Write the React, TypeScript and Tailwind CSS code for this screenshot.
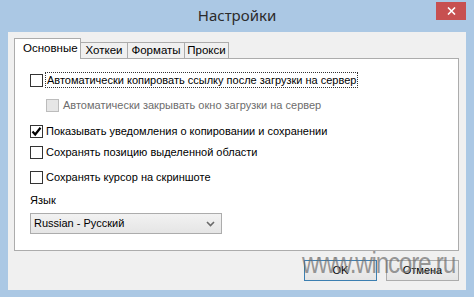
import React from "react";

const font = { fontFamily: '"Liberation Sans", Arial, sans-serif' };

function Box({ checked, disabled }: { checked?: boolean; disabled?: boolean }) {
  return (
    <div
      className={
        "w-[13px] h-[13px] shrink-0 border flex items-center justify-center " +
        (disabled ? "border-[#bcbcbc] bg-[#e6e6e6]" : "border-[#333333] bg-white")
      }
    >
      {checked && (
        <svg width="11" height="11" viewBox="0 0 11 11">
          <path d="M1.5 5.5 L4.2 8.5 L9.5 1.8" fill="none" stroke="#000" strokeWidth="2.2" />
        </svg>
      )}
    </div>
  );
}

export default function App() {
  return (
    <div
      className="w-[474px] h-[297px] bg-[#abc8e4] flex flex-col relative overflow-hidden text-[11px] text-black"
      style={font}
    >
      <div className="h-[32px] shrink-0 relative flex items-center justify-center">
        <span
          className="text-[15px] text-[#2b2b2b] mt-[-2px]"
          style={{ fontFamily: '"Noto Sans", sans-serif' }}
        >
          Настройки
        </span>
        <div className="absolute right-[8px] top-[2px] w-[30px] h-[18px] bg-[#c75050] flex items-center justify-center">
          <svg width="9" height="8" viewBox="0 0 9 8">
            <path d="M1 0.5 L8 7.5 M8 0.5 L1 7.5" stroke="#fff" strokeWidth="1.6" />
          </svg>
        </div>
      </div>
      <div className="mx-[8px] h-[258px] bg-[#f0f0f0] flex flex-col pl-[6px] pr-[7px] pt-[6px]">
        <div className="flex items-end h-[20px]">
          <div className="h-[21px] w-[67px] bg-white border border-b-0 border-[#acacac] flex items-center pl-[8px] relative z-10 mb-[-1px] text-[11.5px]">
            Основные
          </div>
          <div className="h-[16px] w-[47px] bg-[#f0f0f0] border border-l-0 border-b-0 border-[#acacac] flex items-center justify-center text-[11.5px]">
            Хоткеи
          </div>
          <div className="h-[16px] w-[57px] bg-[#f0f0f0] border border-l-0 border-b-0 border-[#acacac] flex items-center justify-center text-[11.5px]">
            Форматы
          </div>
          <div className="h-[16px] w-[44px] bg-[#f0f0f0] border border-l-0 border-b-0 border-[#acacac] flex items-center justify-center text-[11.5px]">
            Прокси
          </div>
        </div>
        <div className="h-[193px] bg-white border border-[#acacac] flex flex-col pl-[15px] pt-[13px]">
          <div className="h-[16px] flex items-center gap-[2px]">
            <Box />
            <span className="border border-dotted border-[#333] px-[1px] leading-[14px] whitespace-nowrap">
              Автоматически копировать ссылку после загрузки на сервер
            </span>
          </div>
          <div className="h-[16px] mt-[9px] flex items-center gap-[4px] pl-[16px] text-[#6d6d6d]">
            <Box disabled />
            <span className="whitespace-nowrap">Автоматически закрывать окно загрузки на сервер</span>
          </div>
          <div className="h-[16px] mt-[10px] flex items-center gap-[3px]">
            <Box checked />
            <span className="whitespace-nowrap">Показывать уведомления о копировании и сохранении</span>
          </div>
          <div className="h-[16px] mt-[5px] flex items-center gap-[3px]">
            <Box />
            <span className="whitespace-nowrap">Сохранять позицию выделенной области</span>
          </div>
          <div className="h-[16px] mt-[9px] flex items-center gap-[3px]">
            <Box />
            <span className="whitespace-nowrap">Сохранять курсор на скриншоте</span>
          </div>
          <div className="h-[16px] mt-[7px] flex items-center">Язык</div>
          <div className="mt-[5px] w-[192px] h-[21px] border border-[#acacac] bg-gradient-to-b from-[#f2f2f2] to-[#e5e5e5] flex items-center justify-between pl-[3px] pr-[6px]">
            <span>Russian - Русский</span>
            <svg width="9" height="6" viewBox="0 0 9 6">
              <path d="M1 1 L4.5 4.5 L8 1" fill="none" stroke="#6a6a6a" strokeWidth="1.6" />
            </svg>
          </div>
        </div>
        <div className="flex justify-end gap-[9px] mt-[9px]">
          <div className="w-[73px] h-[21px] border border-[#3c7fb1] bg-gradient-to-b from-[#f0f0f0] to-[#e5e5e5] flex items-center justify-center">
            OK
          </div>
          <div className="w-[73px] h-[21px] border border-[#acacac] bg-gradient-to-b from-[#f0f0f0] to-[#e5e5e5] flex items-center justify-center">
            Отмена
          </div>
        </div>
      </div>
      <div
        className="absolute left-[302px] top-[249px] text-[29px] text-[#6e6e6e]/70 tracking-[-1.5px] leading-none pointer-events-none whitespace-nowrap scale-x-[0.84] origin-left"
        style={{ fontFamily: '"Liberation Sans", sans-serif' }}
      >
        www.wincore.ru
      </div>
    </div>
  );
}
